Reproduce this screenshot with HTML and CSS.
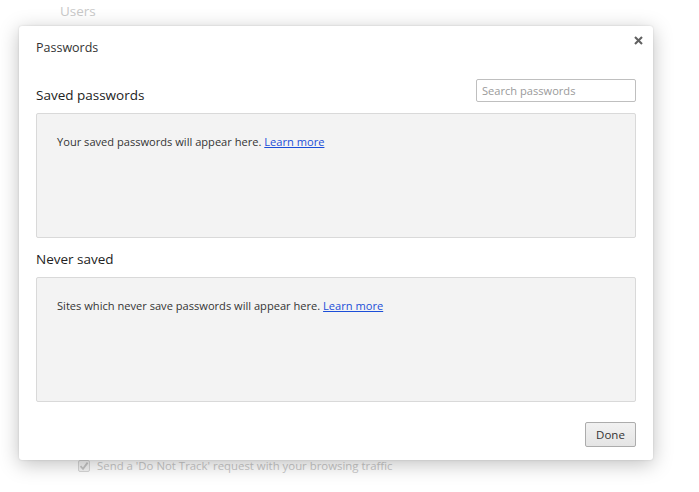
FILE: index.html
```html
<!DOCTYPE html>
<html>
<head>
<meta charset="utf-8">
<link rel="stylesheet" href="styles.css">
</head>
<body>
<div class="page">
  <div class="bg-heading">Users</div>
  <div class="bg-spacer"></div>
  <div class="bg-row">
    <span class="bg-check">
      <svg width="12" height="12" viewBox="0 0 12 12"><rect x="0.5" y="0.5" width="11" height="11" rx="1.5" fill="#f4f4f4" stroke="#d6d6d6"/><path d="M2.5 6.2 L5 8.8 L9.6 2.6" fill="none" stroke="#c4c4c4" stroke-width="1.8"/></svg>
    </span>
    <span>Send a 'Do Not Track' request with your browsing traffic</span>
  </div>
</div>
<div class="dialog">
  <div class="dlg-head">
    <span class="dlg-title">Passwords</span>
    <span class="close">
      <svg width="9" height="9" viewBox="0 0 9 9"><path d="M1 1 L8 8 M8 1 L1 8" stroke="#616161" stroke-width="2.1"/></svg>
    </span>
  </div>
  <div class="section-head">
    <span class="section-title">Saved passwords</span>
    <input class="search" type="text" placeholder="Search passwords">
  </div>
  <div class="list-box">
    <p class="empty">Your saved passwords will appear here. <a href="#">Learn more</a></p>
  </div>
  <div class="section-head second">
    <span class="section-title">Never saved</span>
  </div>
  <div class="list-box">
    <p class="empty">Sites which never save passwords will appear here. <a href="#">Learn more</a></p>
  </div>
  <div class="dlg-foot">
    <button class="done">Done</button>
  </div>
</div>
</body>
</html>
```
FILE: styles.css
```css
html, body { margin: 0; padding: 0; }
body {
  background: #fff;
  font-family: "Open Sans", "Noto Sans", sans-serif;
  color: #333;
  width: 699px;
  height: 492px;
  overflow: hidden;
  position: relative;
}
.page { padding: 2px 0 0 60px; }
.bg-heading { color: #c9c9c9; font-size: 13.5px; line-height: 18px; }
.bg-spacer { height: 438px; }
.bg-row { display: flex; align-items: center; gap: 7px; margin-left: 18px; color: #c8c8c8; font-size: 11.4px; }
.bg-check { display: flex; }

.dialog {
  position: absolute;
  left: 19px;
  top: 26px;
  width: 634px;
  height: 434px;
  box-sizing: border-box;
  background: #fff;
  border-radius: 3px;
  box-shadow: 0 4px 20px rgba(0,0,0,0.25), 0 0 2px rgba(0,0,0,0.15);
  padding: 0 17px 0 17px;
  display: flex;
  flex-direction: column;
}
.dlg-head {
  display: flex;
  justify-content: space-between;
  align-items: flex-start;
  height: 50px;
  box-sizing: border-box;
  padding-top: 13px;
}
.dlg-title { font-size: 12.5px; color: #333; line-height: 18px; }
.close { display: flex; margin-top: -3px; margin-right: -7px; }
.section-head {
  display: flex;
  justify-content: space-between;
  align-items: flex-end;
  height: 37px;
  box-sizing: border-box;
  padding-bottom: 2px;
}
.section-head.second { height: 39px; padding-bottom: 2px; }
.section-title { font-size: 13.5px; color: #222; line-height: 20px; padding-bottom: 6px; }
.search {
  width: 160px;
  height: 23px;
  box-sizing: border-box;
  border: 1px solid #bfbfbf;
  border-radius: 2px;
  padding: 0 5px;
  font-family: inherit;
  font-size: 11.1px;
  margin-bottom: 9px;
}
.search::placeholder { color: #9a9a9a; }
.list-box {
  height: 125px;
  box-sizing: border-box;
  background: #f3f3f3;
  border: 1px solid #d9d9d9;
  border-radius: 2px;
  padding: 20px 20px;
}
.empty { margin: 0; font-size: 11.1px; color: #333; line-height: 16px; }
.empty a { color: #1b4ed8; text-decoration: underline; }
.dlg-foot {
  display: flex;
  justify-content: flex-end;
  padding-top: 20px;
}
.done {
  width: 51px;
  height: 25px;
  box-sizing: border-box;
  border: 1px solid #acacac;
  border-radius: 2px;
  background: linear-gradient(#f1f1f1, #e5e5e5);
  font-family: inherit;
  font-size: 11.5px;
  color: #333;
  padding: 0;
  margin-right: 0;
}
```
